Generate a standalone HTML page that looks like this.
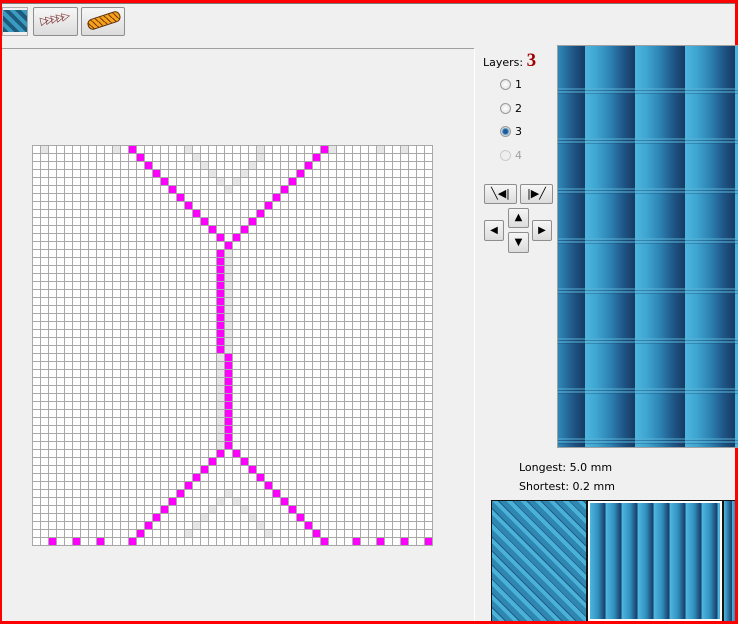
<!DOCTYPE html>
<html><head><meta charset="utf-8">
<style>
body{margin:0;width:738px;height:624px;background:#f0f0f0;position:relative;overflow:hidden;font-family:Tahoma,"DejaVu Sans","Liberation Sans",sans-serif;font-size:11px;color:#000}
.a{position:absolute}
.btn{position:absolute;background:linear-gradient(#f6f6f6,#dcdcdc);border:1px solid #8e8e8e;border-radius:2px;box-sizing:border-box}
#grid{left:32px;top:145px;width:401px;height:401px;background-color:#fff;background-image:linear-gradient(90deg,#a8a8a8 1px,transparent 1px),linear-gradient(#a8a8a8 1px,transparent 1px);background-size:8px 8px}
.c{position:absolute;width:7px;height:7px}
.m{background:#ff00ff}.g{background:#e6e6e6}
#prev{left:557px;top:45px;width:181px;height:403px;border:1px solid #a0a0a0;border-right:none;box-sizing:border-box;overflow:hidden;
background-image:repeating-linear-gradient(180deg,transparent 0 42px,rgba(90,180,215,.45) 42px 44px,rgba(20,60,100,.35) 44px 45px,rgba(90,180,215,.5) 45px 47px,rgba(20,60,100,.3) 47px 48px,transparent 48px 50px),
linear-gradient(90deg,#4db6df 0,#3ea4d0 12px,#2c80b0 26px,#1f5788 38px,#163a62 50px);background-size:100% 100%,50px 100%;background-repeat:no-repeat,repeat-x;background-position:0 0,27px 0}
.rad{position:absolute;width:11px;height:11px;border-radius:50%;border:1px solid #9a9a9a;background:radial-gradient(#fff,#ddd);box-sizing:border-box}
</style></head><body>
<div class="a" style="left:0;top:0;width:738px;height:3px;background:#f00"></div>
<div class="a" style="left:0;top:0;width:2px;height:624px;background:#f00"></div>
<div class="a" style="left:735px;top:0;width:3px;height:624px;background:#f00"></div>
<div class="a" style="left:0;top:621px;width:738px;height:3px;background:#f00"></div>
<div class="a" style="left:2px;top:3px;width:733px;height:1px;background:#7a7a7a"></div>

<div class="a" style="left:2px;top:7px;width:26px;height:29px;background:#f0f0f0;border:1px solid #aaa;box-sizing:border-box"></div>
<div class="a" style="left:3px;top:10px;width:24px;height:22px;background:repeating-linear-gradient(45deg,#1c5b7c 0 4px,#3a9ac0 4px 8px),#2a7aa0"></div>
<div class="btn" style="left:33px;top:7px;width:45px;height:29px"></div>
<div class="a" style="left:40px;top:12px;font-size:11px;color:#7a3030;letter-spacing:-3px;transform:rotate(-12deg)">▷▷▷▷▷</div>
<div class="btn" style="left:81px;top:7px;width:44px;height:29px"></div>
<div class="a" style="left:87px;top:15px;width:32px;height:9px;border-radius:5px;background:repeating-linear-gradient(60deg,#f7a21b 0 3px,#7a3a00 3px 4px);transform:rotate(-18deg);border:1px solid #5a2a00"></div>

<div class="a" style="left:2px;top:48px;width:472px;height:1px;background:#a0a0a0"></div>
<div class="a" style="left:474px;top:49px;width:1px;height:572px;background:#fff"></div>

<div id="grid" class="a"></div>

<div class="a" style="left:483px;top:50px;">Layers: <span style="font-family:'Liberation Serif',serif;font-size:19px;font-weight:bold;color:#a00000">3</span></div>
<div class="rad" style="left:500px;top:79px"></div><div class="a" style="left:515px;top:78px">1</div>
<div class="rad" style="left:500px;top:103px"></div><div class="a" style="left:515px;top:102px">2</div>
<div class="rad" style="left:500px;top:126px;background:radial-gradient(#1a5a9a 0 2px,#5a9ad0 3px,#ddd 4px)"></div><div class="a" style="left:515px;top:125px">3</div>
<div class="rad" style="left:500px;top:150px;border-color:#ccc;background:#eee"></div><div class="a" style="left:515px;top:149px;color:#a0a0a0">4</div>

<div class="btn" style="left:484px;top:184px;width:33px;height:20px;text-align:center;line-height:18px;font-size:11px">╲◀|</div>
<div class="btn" style="left:520px;top:184px;width:33px;height:20px;text-align:center;line-height:18px;font-size:11px">|▶╱</div>
<div class="btn" style="left:508px;top:208px;width:21px;height:20px;text-align:center;line-height:18px;font-size:10px">▲</div>
<div class="btn" style="left:484px;top:220px;width:20px;height:21px;text-align:center;line-height:19px;font-size:10px">◀</div>
<div class="btn" style="left:532px;top:220px;width:20px;height:21px;text-align:center;line-height:19px;font-size:10px">▶</div>
<div class="btn" style="left:508px;top:232px;width:21px;height:21px;text-align:center;line-height:19px;font-size:10px">▼</div>

<div id="prev" class="a"></div>

<div class="a" style="left:519px;top:461px">Longest: 5.0 mm</div>
<div class="a" style="left:519px;top:480px">Shortest: 0.2 mm</div>

<div class="a" style="left:491px;top:500px;width:244px;height:121px;background:#111"></div>
<div class="a" style="left:492px;top:501px;width:94px;height:120px;background:repeating-linear-gradient(45deg,#2f86b0 0 5px,#4ab2d8 5px 9px,#1e5c86 9px 10px),repeating-linear-gradient(-45deg,rgba(20,60,100,.5) 0 1px,transparent 1px 10px)"></div>
<div class="a" style="left:588px;top:501px;width:134px;height:120px;border:2px solid #fff;box-sizing:border-box;background:repeating-linear-gradient(90deg,#4db6df 0,#3290bf 8px,#173d68 15px,#4db6df 16px)"></div>
<div class="a" style="left:724px;top:501px;width:11px;height:120px;background:repeating-linear-gradient(90deg,#4db6df 0,#1f5f8f 6px,#173d68 8px)"></div>

<script>
var g=document.getElementById('grid');
function c(col,row,k){var d=document.createElement('div');d.className='c '+k;d.style.left=(col*8+1)+'px';d.style.top=(row*8+1)+'px';g.appendChild(d);}
[1,10,19,28,37,43,46].forEach(function(x){c(x,0,'g')});
for(var k=1;k<6;k++){c(19+k,k,'g');c(29-k,k,'g');}
for(var r=13;r<26;r++)c(24,r,'g');
for(var r=26;r<38;r++)c(23,r,'g');
for(var k=0;k<6;k++){c(24-k,43+k,'g');c(24+k,43+k,'g');}
for(var k=0;k<12;k++){c(12+k,k,'m');c(36-k,k,'m');}
c(24,12,'m');
for(var r=13;r<26;r++)c(23,r,'m');
for(var r=26;r<38;r++)c(24,r,'m');
for(var k=0;k<12;k++){c(23-k,38+k,'m');c(25+k,38+k,'m');}
[2,5,8,40,43,46,49].forEach(function(x){c(x,49,'m')});
</script>
</body></html>
